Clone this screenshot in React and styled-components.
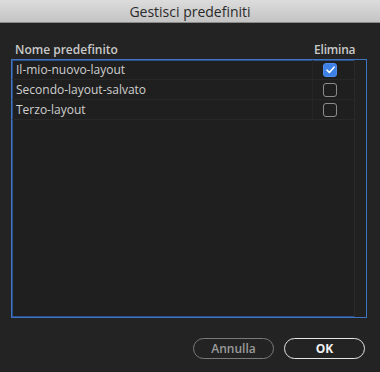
import styled, { createGlobalStyle } from "styled-components";

const Global = createGlobalStyle`
  html, body { margin: 0; padding: 0; background: #232323; }
  body { font-family: "Open Sans", "Liberation Sans", sans-serif; }
`;

const Window = styled.div`
  width: 380px;
  height: 372px;
  background: #232323;
  display: flex;
  flex-direction: column;
  overflow: hidden;
`;

const TitleBar = styled.div`
  height: 23px;
  background: linear-gradient(#dcdcdc, #c4c4c4);
  border-bottom: 1px solid #8a8a8a;
  box-sizing: border-box;
  display: flex;
  align-items: center;
  justify-content: center;
  color: #2a2a2a;
  font-size: 14px;
`;

const Body = styled.div`
  padding: 16px 13px 0 11px;
  display: flex;
  flex-direction: column;
`;

const HeaderRow = styled.div`
  display: grid;
  grid-template-columns: 1fr 53px;
  height: 20px;
  align-items: center;
  color: #c9c9c9;
  font-size: 12px;
  font-weight: 600;
`;

const HeaderCell = styled.div`
  padding-left: ${(p) => (p.$right ? "0" : "4px")};
  letter-spacing: ${(p) => (p.$right ? "-0.2px" : "0")};
`;

const ListBox = styled.div`
  height: 259px;
  box-sizing: border-box;
  border: 1px solid #3f74c2;
  box-shadow: inset 0 0 0 1px #2b4f86;
  background: #1f1f1f;
  display: grid;
  grid-template-columns: 1fr 42px 11px;
  grid-template-rows: repeat(3, 20px) 1fr;
`;

const NameCell = styled.div`
  display: flex;
  align-items: center;
  padding-left: 4px;
  color: #cfcfcf;
  font-size: 12px;
  border-bottom: 1px solid #282828;
  border-right: 1px solid #262626;
`;

const CheckCell = styled.div`
  display: flex;
  align-items: center;
  justify-content: center;
  padding-right: 7px;
  border-bottom: 1px solid #282828;
  border-right: 1px solid #2a2a2a;
`;

const Track = styled.div`
  grid-column: 3;
  grid-row: 1 / span 4;
  background: #212121;
`;

const Filler = styled.div`
  border-right: 1px solid ${(p) => (p.$edge ? "#2a2a2a" : "transparent")};
`;

const Box = styled.div`
  width: 14px;
  height: 14px;
  box-sizing: border-box;
  border-radius: 3px;
  border: 1.5px solid ${(p) => (p.$checked ? "#4d8ef0" : "#8c8c8c")};
  background: ${(p) => (p.$checked ? "#3d80e6" : "transparent")};
  display: flex;
  align-items: center;
  justify-content: center;
`;

const Footer = styled.div`
  display: flex;
  justify-content: flex-end;
  gap: 10px;
  padding: 20px 15px 0 0;
`;

const Button = styled.button`
  width: 81px;
  height: 21px;
  border-radius: 11px;
  background: transparent;
  border: 1.5px solid ${(p) => (p.$primary ? "#e6e6e6" : "#7a7a7a")};
  color: ${(p) => (p.$primary ? "#f2f2f2" : "#9a9a9a")};
  font-family: inherit;
  font-size: 12px;
  font-weight: ${(p) => (p.$primary ? 700 : 600)};
  padding: 0;
  cursor: pointer;
`;

const rows = [
  { name: "Il-mio-nuovo-layout", checked: true },
  { name: "Secondo-layout-salvato", checked: false },
  { name: "Terzo-layout", checked: false },
];

const Check = () => (
  <svg width="9" height="8" viewBox="0 0 9 8">
    <path d="M1 4.2 L3.4 6.5 L8 1.2" fill="none" stroke="#fff" strokeWidth="1.6" strokeLinecap="round" strokeLinejoin="round" />
  </svg>
);

export default function App() {
  return (
    <Window>
      <Global />
      <TitleBar>Gestisci predefiniti</TitleBar>
      <Body>
        <HeaderRow>
          <HeaderCell>Nome predefinito</HeaderCell>
          <HeaderCell $right>Elimina</HeaderCell>
        </HeaderRow>
        <ListBox>
          {rows.flatMap((r) => [
            <NameCell key={r.name}>{r.name}</NameCell>,
            <CheckCell key={r.name + "-c"}>
              <Box $checked={r.checked}>{r.checked && <Check />}</Box>
            </CheckCell>,
          ])}
          <Filler />
          <Filler $edge />
          <Track />
        </ListBox>
      </Body>
      <Footer>
        <Button>Annulla</Button>
        <Button $primary>OK</Button>
      </Footer>
    </Window>
  );
}
